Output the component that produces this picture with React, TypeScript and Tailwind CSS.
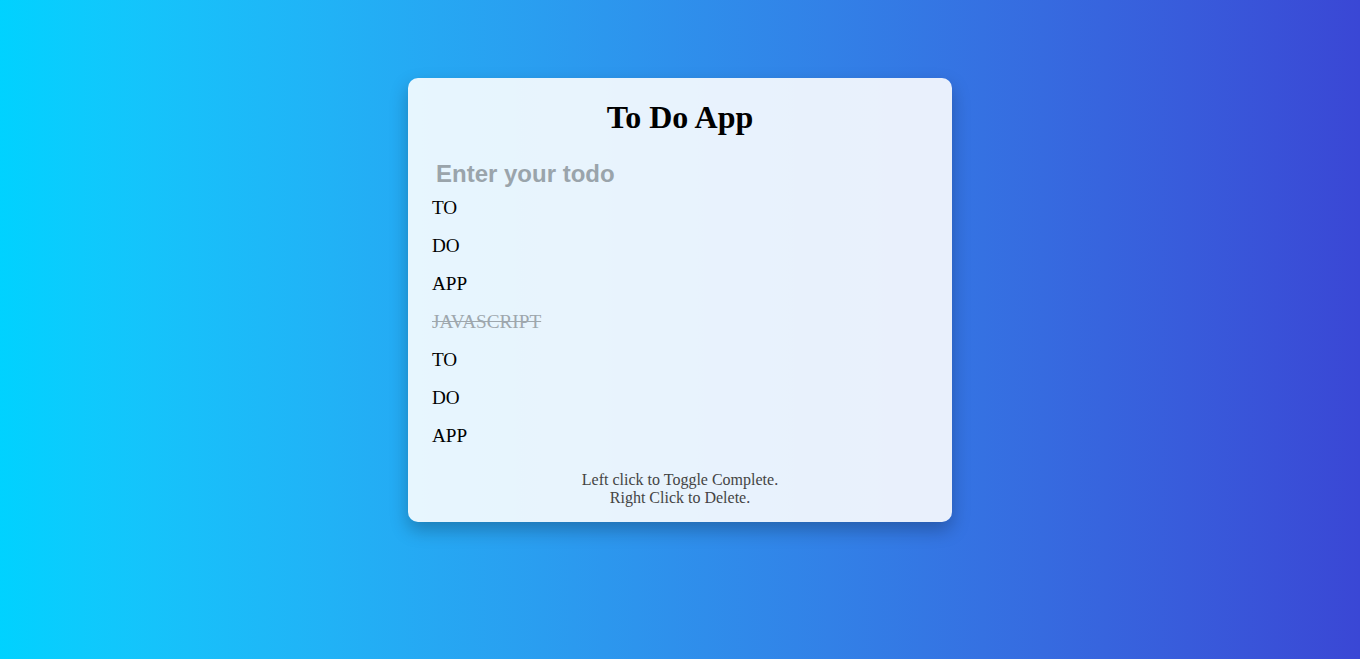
import React, { useState } from 'react';

type Todo = {
  id: number;
  text: string;
  completed: boolean;
};

const initialTodos: Todo[] = [
  { id: 1, text: 'TO', completed: false },
  { id: 2, text: 'DO', completed: false },
  { id: 3, text: 'APP', completed: false },
  { id: 4, text: 'JAVASCRIPT', completed: true },
  { id: 5, text: 'TO', completed: false },
  { id: 6, text: 'DO', completed: false },
  { id: 7, text: 'APP', completed: false },
];

const App: React.FC = () => {
  const [todos, setTodos] = useState<Todo[]>(initialTodos);
  const [value, setValue] = useState('');

  const handleSubmit = (e: React.FormEvent) => {
    e.preventDefault();
    if (!value.trim()) return;
    setTodos([...todos, { id: Date.now(), text: value.trim(), completed: false }]);
    setValue('');
  };

  const toggleTodo = (id: number) => {
    setTodos(todos.map((t) => (t.id === id ? { ...t, completed: !t.completed } : t)));
  };

  const deleteTodo = (e: React.MouseEvent, id: number) => {
    e.preventDefault();
    setTodos(todos.filter((t) => t.id !== id));
  };

  return (
    <div className="min-h-screen w-full bg-gradient-to-r from-[#00d2ff] to-[#3a47d5] pt-[78px] font-['Liberation_Serif',serif]">
      <div className="mx-auto w-[544px] rounded-[10px] bg-white/[0.89] px-6 pt-[21px] pb-[15px] shadow-[0_8px_18px_rgba(0,0,0,0.25)]">
        <h1 className="text-center text-[32px] leading-[37px] font-bold text-black">To Do App</h1>

        <form onSubmit={handleSubmit} className="mt-[16px]">
          <input
            type="text"
            value={value}
            onChange={(e) => setValue(e.target.value)}
            placeholder="Enter your todo"
            className="block h-[37px] w-full bg-transparent pt-[6px] pl-[4px] font-['Liberation_Sans',Arial,sans-serif] text-[24px] font-bold text-[#333] placeholder-[#9aa4ab] outline-none"
          />
        </form>

        <ul>
          {todos.map((todo) => (
            <li
              key={todo.id}
              onClick={() => toggleTodo(todo.id)}
              onContextMenu={(e) => deleteTodo(e, todo.id)}
              className={`cursor-pointer py-2 text-[19.2px] leading-[22px] ${
                todo.completed ? 'text-[#9ea7ad] line-through' : 'text-black'
              }`}
            >
              {todo.text}
            </li>
          ))}
        </ul>

        <p className="mt-4 text-center text-[16px] leading-[18px] text-[#444]">
          Left click to Toggle Complete.
          <br />
          Right Click to Delete.
        </p>
      </div>
    </div>
  );
};

export default App;
